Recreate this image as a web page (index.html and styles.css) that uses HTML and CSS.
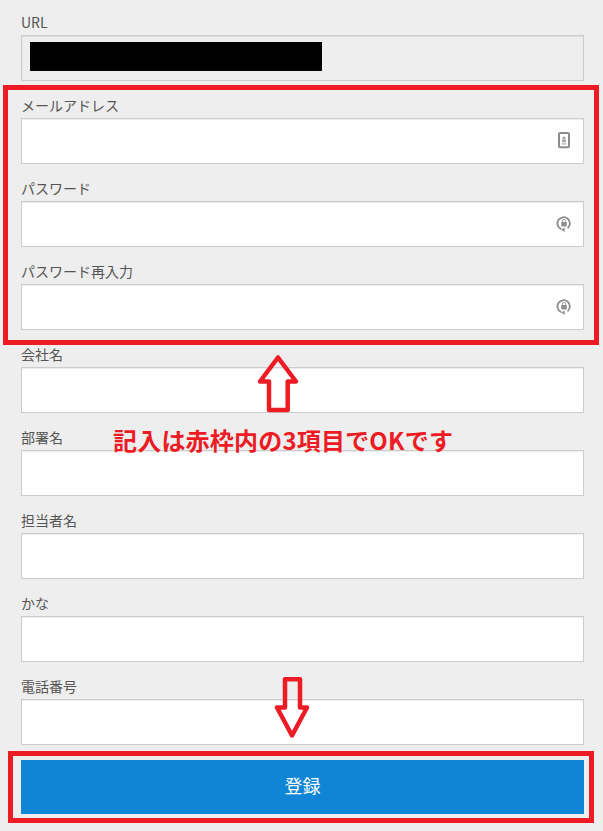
FILE: index.html
```html
<!DOCTYPE html>
<html lang="ja">
<head>
<meta charset="utf-8">
<title>登録</title>
<link rel="stylesheet" href="styles.css">
</head>
<body>
<form class="form">
  <div class="field">
    <label class="label">URL</label>
    <div class="input input-readonly"><span class="redaction"></span></div>
  </div>
  <div class="field">
    <label class="label">メールアドレス</label>
    <div class="input-wrap">
      <input class="input" type="text">
      <svg class="field-icon" viewBox="0 0 16 18" width="16" height="18"><rect x="3" y="1" width="10" height="14.2" rx="1" fill="none" stroke="#8c8c8c" stroke-width="2"/><circle cx="8" cy="6" r="1.5" fill="#a0a0a0"/><rect x="6" y="7.6" width="4" height="2.6" fill="#a8a8a8"/><rect x="5.6" y="11" width="4.8" height="1.8" fill="#c8c8c8"/></svg>
    </div>
  </div>
  <div class="field">
    <label class="label">パスワード</label>
    <div class="input-wrap">
      <input class="input" type="text">
      <svg class="field-icon" viewBox="0 0 16 18" width="16" height="18"><path d="M5.2 14.1A6.2 6.2 0 1 1 11.6 13.2" fill="none" stroke="#8c8c8c" stroke-width="1.8"/><path d="M8.6 17V12.4L5.2 14.6Z" fill="#8c8c8c"/><rect x="5.2" y="7" width="5.6" height="4.4" rx=".6" fill="#909090"/><path d="M6.4 7.2V6a1.6 1.6 0 0 1 3.2 0v1.2" fill="none" stroke="#a0a0a0"/></svg>
    </div>
  </div>
  <div class="field">
    <label class="label">パスワード再入力</label>
    <div class="input-wrap">
      <input class="input" type="text">
      <svg class="field-icon" viewBox="0 0 16 18" width="16" height="18"><path d="M5.2 14.1A6.2 6.2 0 1 1 11.6 13.2" fill="none" stroke="#8c8c8c" stroke-width="1.8"/><path d="M8.6 17V12.4L5.2 14.6Z" fill="#8c8c8c"/><rect x="5.2" y="7" width="5.6" height="4.4" rx=".6" fill="#909090"/><path d="M6.4 7.2V6a1.6 1.6 0 0 1 3.2 0v1.2" fill="none" stroke="#a0a0a0"/></svg>
    </div>
  </div>
  <div class="field">
    <label class="label">会社名</label>
    <input class="input" type="text">
  </div>
  <div class="field">
    <label class="label">部署名</label>
    <input class="input" type="text">
  </div>
  <div class="field">
    <label class="label">担当者名</label>
    <input class="input" type="text">
  </div>
  <div class="field">
    <label class="label">かな</label>
    <input class="input" type="text">
  </div>
  <div class="field">
    <label class="label">電話番号</label>
    <input class="input" type="text">
  </div>
  <button class="submit" type="button">登録</button>
</form>

<div class="frame frame-fields"></div>
<div class="frame frame-submit"></div>
<p class="note">記入は赤枠内の3項目でOKです</p>
<svg class="arrow arrow-up" viewBox="0 0 45 59" width="45" height="59"><path d="M22 3.5 L40 27.5 H31.7 V56 H13 V27.5 H4 Z" fill="none" stroke="#ed1c24" stroke-width="4.5" stroke-linejoin="round"/></svg>
<svg class="arrow arrow-down" viewBox="0 0 36 63" width="36" height="63"><path d="M11 2.2 H26 V30.5 H33 L18 58.5 L3 30.5 H11 Z" fill="none" stroke="#ed1c24" stroke-width="4.5" stroke-linejoin="round"/></svg>
</body>
</html>
```

FILE: styles.css
```css
* { box-sizing: border-box; }
html, body { margin: 0; padding: 0; }
body {
  position: relative;
  width: 603px;
  height: 831px;
  overflow: hidden;
  background: #eeeeee;
  font-family: "Noto Sans CJK JP", "Open Sans", sans-serif;
  color: #555555;
}
.form {
  display: flex;
  flex-direction: column;
  gap: 12px;
  padding: 10px 19px 0 21px;
}
.field { display: flex; flex-direction: column; }
.label {
  height: 25px;
  font-size: 14px;
  line-height: 24px;
  white-space: nowrap;
}
.input {
  display: block;
  width: 100%;
  height: 46px;
  margin: 0;
  padding: 0 8px;
  border: 1px solid #cccccc;
  border-radius: 0;
  background: #ffffff;
  box-shadow: inset 0 1px 1px rgba(0, 0, 0, .075);
  outline: 0;
}
.input-readonly {
  background: #eeeeee;
  padding-top: 6px;
}
.redaction {
  display: block;
  width: 292px;
  height: 29px;
  background: #000000;
}
.input-wrap { position: relative; }
.field-icon {
  position: absolute;
  right: 12px;
  top: 14px;
}
.submit {
  height: 54px;
  margin-top: 3px;
  padding: 0 0 4px;
  border: 0;
  border-radius: 0;
  background: #1085d6;
  color: #ffffff;
  font-family: inherit;
  font-size: 18px;
}
.frame {
  position: absolute;
  border: 5px solid #ed1c24;
}
.frame-fields { left: 3px; top: 85px; width: 596px; height: 260px; }
.frame-submit { left: 8px; top: 751px; width: 586px; height: 72px; }
.note {
  position: absolute;
  left: 113px;
  top: 423px;
  margin: 0;
  color: #ed1c24;
  font-size: 24px;
  font-weight: 700;
  letter-spacing: .2px;
  line-height: 34px;
  white-space: nowrap;
}
.arrow { position: absolute; }
.arrow-up { left: 256px; top: 354px; }
.arrow-down { left: 274px; top: 677px; }
```
